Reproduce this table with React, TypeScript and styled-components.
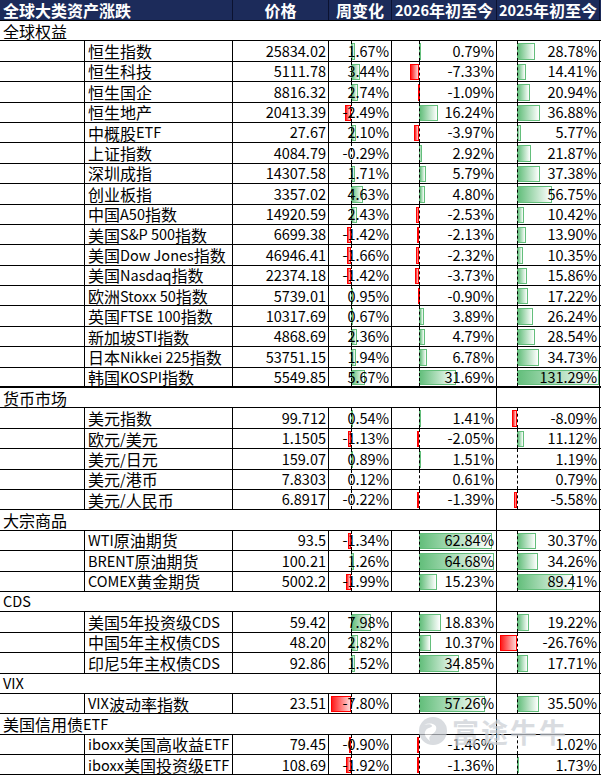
import React from 'react';
import styled, { createGlobalStyle } from 'styled-components';

const GlobalStyle = createGlobalStyle`
  html, body {
    margin: 0;
    padding: 0;
    background: #fff;
  }
  body {
    font-family: "Noto Sans CJK SC", "Liberation Sans", sans-serif;
  }
`;

const COLS = '85px 148px 96px 63px 105px 103px';

type Item = [string, string, number, number, number];
type Group = { title: string; items: Item[] };

const groups: Group[] = [
  {
    title: '全球权益',
    items: [
      ['恒生指数', '25834.02', 1.67, 0.79, 28.78],
      ['恒生科技', '5111.78', 3.44, -7.33, 14.41],
      ['恒生国企', '8816.32', 2.74, -1.09, 20.94],
      ['恒生地产', '20413.39', -2.49, 16.24, 36.88],
      ['中概股ETF', '27.67', 2.1, -3.97, 5.77],
      ['上证指数', '4084.79', -0.29, 2.92, 21.87],
      ['深圳成指', '14307.58', 1.71, 5.79, 37.38],
      ['创业板指', '3357.02', 4.63, 4.8, 56.75],
      ['中国A50指数', '14920.59', 2.43, -2.53, 10.42],
      ['美国S&P 500指数', '6699.38', -1.42, -2.13, 13.9],
      ['美国Dow Jones指数', '46946.41', -1.66, -2.32, 10.35],
      ['美国Nasdaq指数', '22374.18', -1.42, -3.73, 15.86],
      ['欧洲Stoxx 50指数', '5739.01', 0.95, -0.9, 17.22],
      ['英国FTSE 100指数', '10317.69', 0.67, 3.89, 26.24],
      ['新加坡STI指数', '4868.69', 2.36, 4.79, 28.54],
      ['日本Nikkei 225指数', '53751.15', 1.94, 6.78, 34.73],
      ['韩国KOSPI指数', '5549.85', 5.67, 31.69, 131.29],
    ],
  },
  {
    title: '货币市场',
    items: [
      ['美元指数', '99.712', 0.54, 1.41, -8.09],
      ['欧元/美元', '1.1505', -1.13, -2.05, 11.12],
      ['美元/日元', '159.07', 0.89, 1.51, 1.19],
      ['美元/港币', '7.8303', 0.12, 0.61, 0.79],
      ['美元/人民币', '6.8917', -0.22, -1.39, -5.58],
    ],
  },
  {
    title: '大宗商品',
    items: [
      ['WTI原油期货', '93.5', -1.34, 62.84, 30.37],
      ['BRENT原油期货', '100.21', 1.26, 64.68, 34.26],
      ['COMEX黄金期货', '5002.2', -1.99, 15.23, 89.41],
    ],
  },
  {
    title: 'CDS',
    items: [
      ['美国5年投资级CDS', '59.42', 7.98, 18.83, 19.22],
      ['中国5年主权债CDS', '48.20', 2.82, 10.37, -26.76],
      ['印尼5年主权债CDS', '92.86', 1.52, 34.85, 17.71],
    ],
  },
  {
    title: 'VIX',
    items: [['VIX波动率指数', '23.51', -7.8, 57.26, 35.5]],
  },
  {
    title: '美国信用债ETF',
    items: [
      ['iboxx美国高收益ETF', '79.45', -0.9, -1.46, 1.02],
      ['iboxx美国投资级ETF', '108.69', -1.92, -1.36, 1.73],
    ],
  },
];

// axis offset inside the cell and pixels per percent point, per column
const scales = {
  week: { axis: 22, k: 2.55 },
  y2026: { axis: 27, k: 1.16 },
  y2025: { axis: 20, k: 0.625 },
};

const Sheet = styled.div`
  position: relative;
  width: 601px;
  font-size: 16px;
  color: #000;
`;

const HeaderRow = styled.div`
  display: grid;
  grid-template-columns: 233px 96px 63px 105px 103px;
  height: 21px;
  box-sizing: border-box;
  background: #1c2b5a;
  color: #fff;
  font-weight: 700;
  border-bottom: 1px solid #000;
`;

const HeadCell = styled.div<{ $left?: boolean }>`
  display: flex;
  align-items: center;
  justify-content: ${({ $left }) => ($left ? 'flex-start' : 'center')};
  padding: 0 ${({ $left }) => ($left ? '3px' : '0')};
  border-right: 1px solid #0b1230;
  white-space: nowrap;
  line-height: 1;
`;

const Row = styled.div<{ $thick?: boolean }>`
  display: grid;
  grid-template-columns: ${COLS};
  height: 20.4px;
  box-sizing: border-box;
  border-bottom: ${({ $thick }) => ($thick ? '2px' : '1px')} solid #000;
`;

const GroupLabel = styled.div`
  grid-column: 1 / 5;
  display: flex;
  align-items: center;
  padding-left: 3px;
  white-space: nowrap;
  line-height: 1;
`;

const Cell = styled.div<{ $align?: 'left' | 'right'; $line?: boolean; $num?: boolean }>`
  position: relative;
  display: flex;
  align-items: center;
  justify-content: ${({ $align }) => ($align === 'left' ? 'flex-start' : 'flex-end')};
  padding: 0 2px 0 3px;
  border-right: ${({ $line = true }) => ($line ? '1px solid #000' : 'none')};
  font-size: ${({ $num }) => ($num ? '14.5px' : '16px')};
  white-space: nowrap;
  line-height: 1;
`;

const Latin = styled.span`
  font-size: 14.5px;
`;

const CellText = styled.span`
  position: relative;
  z-index: 2;
`;

const Bar = styled.div<{ $neg: boolean }>`
  position: absolute;
  top: 2px;
  bottom: 1px;
  box-sizing: border-box;
  z-index: 1;
  border: 1px solid ${({ $neg }) => ($neg ? '#ff0000' : '#63be7b')};
  background: ${({ $neg }) =>
    $neg
      ? 'linear-gradient(to right, #ff1a1a 0%, #ffd6d6 100%)'
      : 'linear-gradient(to right, #63be7b 0%, #ffffff 100%)'};
`;

const Axis = styled.div`
  position: absolute;
  top: 0;
  bottom: 0;
  width: 0;
  z-index: 3;
  border-left: 1px dashed #000;
`;

const Watermark = styled.div`
  position: absolute;
  left: 418px;
  top: 716px;
  display: flex;
  align-items: center;
  gap: 4px;
  opacity: 0.7;
  pointer-events: none;
  z-index: 5;
`;

const WatermarkText = styled.span`
  font-size: 27px;
  font-weight: 700;
  letter-spacing: 2px;
  color: #c9ced4;
  line-height: 1;
`;

const pct = (v: number) => `${v.toFixed(2)}%`;

// CJK text stays at 16px, latin runs get the narrower size (like Calibri in the sheet)
const Mixed: React.FC<{ text: string }> = ({ text }) => (
  <>
    {text.split(/([A-Za-z0-9&/ .%]+)/).map((part, i) =>
      /^[A-Za-z0-9&/ .%]+$/.test(part) ? <Latin key={i}>{part}</Latin> : part
    )}
  </>
);

const BarCell: React.FC<{ value: number; scale: { axis: number; k: number } }> = ({
  value,
  scale,
}) => {
  const w = Math.abs(value) * scale.k;
  const neg = value < 0;
  return (
    <Cell $num>
      {w >= 0.9 && (
        <Bar
          $neg={neg}
          style={{ left: neg ? scale.axis - w : scale.axis, width: Math.max(w, 1.5) }}
        />
      )}
      <Axis style={{ left: scale.axis }} />
      <CellText>{pct(value)}</CellText>
    </Cell>
  );
};

const Logo = () => (
  <svg width="30" height="30" viewBox="0 0 30 30">
    <circle cx="15" cy="15" r="14" fill="#c9ced4" />
    <path
      d="M6 9 C12 6, 20 8, 18 14 C16 19, 9 19, 12 25 C8 22, 5 18, 8 14 C10 11, 14 12, 14 10 C14 8, 9 8, 6 9 Z"
      fill="#fff"
    />
  </svg>
);

export default function App() {
  return (
    <>
      <GlobalStyle />
      <Sheet>
        <HeaderRow>
          <HeadCell $left>全球大类资产涨跌</HeadCell>
          <HeadCell>价格</HeadCell>
          <HeadCell>周变化</HeadCell>
          <HeadCell>
            <Mixed text="2026年初至今" />
          </HeadCell>
          <HeadCell>
            <Mixed text="2025年初至今" />
          </HeadCell>
        </HeaderRow>
        {groups.map((g, gi) => (
          <React.Fragment key={g.title}>
            <Row>
              <GroupLabel>
                <Mixed text={g.title} />
              </GroupLabel>
              <Cell $line={gi > 0} />
              <Cell $line={gi > 0} />
            </Row>
            {g.items.map(([name, price, week, y26, y25], i) => (
              <Row key={name} $thick={gi === 0 && i === g.items.length - 1}>
                <Cell />
                <Cell $align="left">
                  <Mixed text={name} />
                </Cell>
                <Cell $num>{price}</Cell>
                <BarCell value={week} scale={scales.week} />
                <BarCell value={y26} scale={scales.y2026} />
                <BarCell value={y25} scale={scales.y2025} />
              </Row>
            ))}
          </React.Fragment>
        ))}
        <Watermark>
          <Logo />
          <WatermarkText>富途牛牛</WatermarkText>
        </Watermark>
      </Sheet>
    </>
  );
}
